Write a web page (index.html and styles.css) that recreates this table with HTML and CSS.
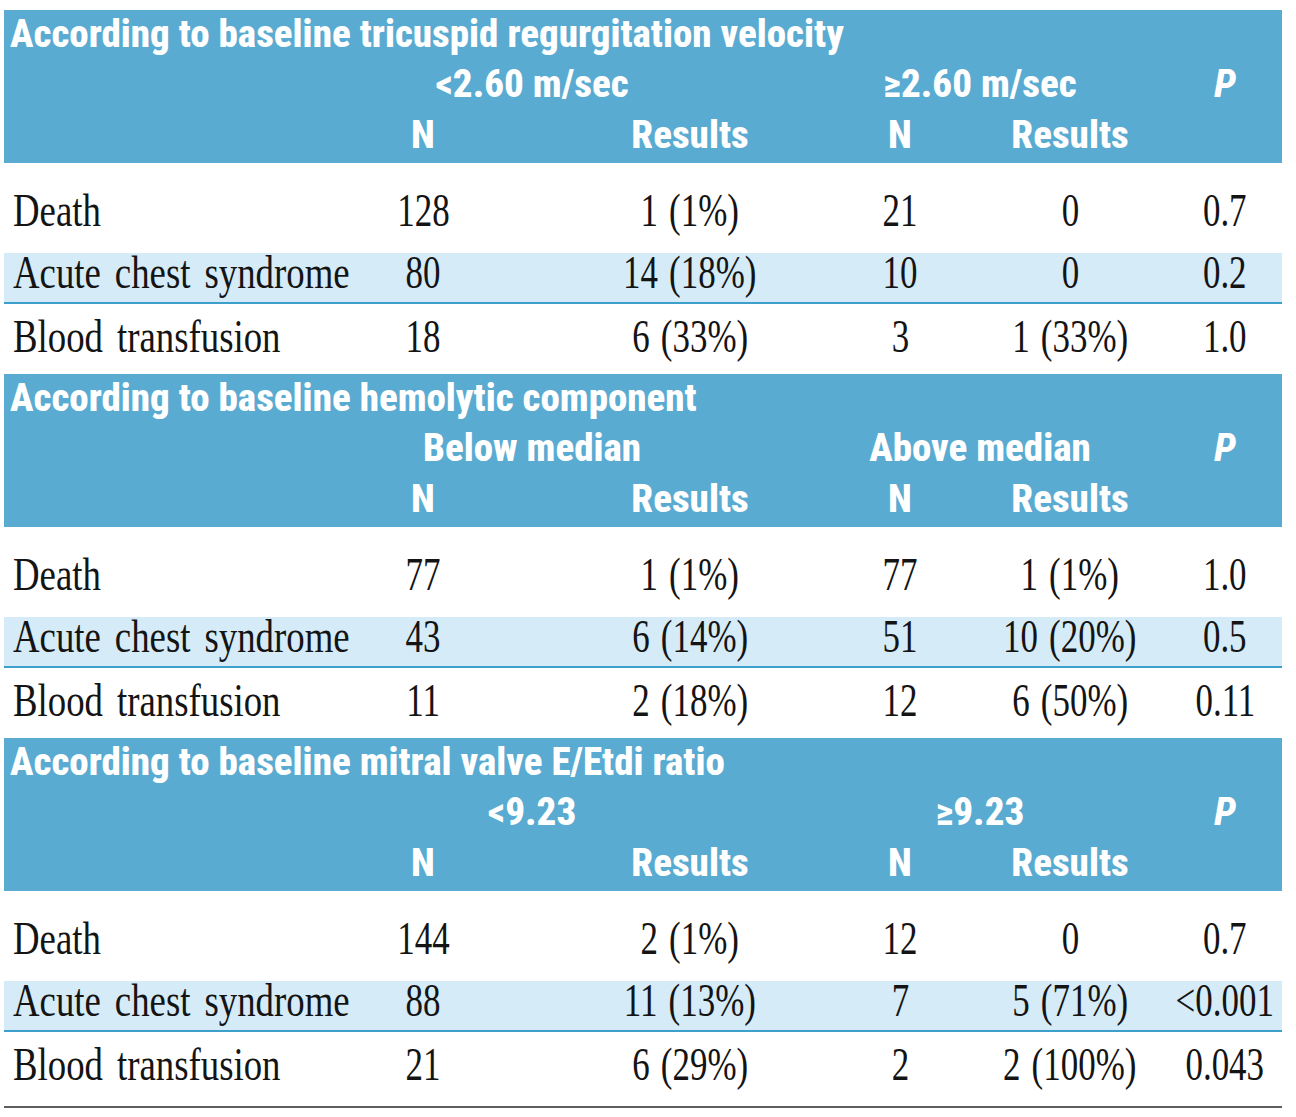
FILE: index.html
```html
<!DOCTYPE html>
<html lang="en">
<head>
<meta charset="utf-8">
<title>Outcomes according to baseline echocardiography</title>
<link rel="stylesheet" href="styles.css">
</head>
<body>
<div class="table">

  <section class="sec">
    <div class="head">
      <div class="title">According to baseline tricuspid regurgitation velocity</div>
      <div class="grid groups">
        <div></div>
        <div class="g1">&lt;2.60 m/sec</div>
        <div class="g2">≥2.60 m/sec</div>
        <div class="pcol"><i>P</i></div>
      </div>
      <div class="grid cols">
        <div></div>
        <div class="n1">N</div>
        <div class="r1">Results</div>
        <div class="n2">N</div>
        <div class="r2">Results</div>
        <div></div>
      </div>
    </div>
    <div class="grid row ra">
      <div class="lab"><span class="sq">Death</span></div>
      <div class="n1"><span class="nq">128</span></div>
      <div class="r1"><span class="nq">1 (1%)</span></div>
      <div class="n2"><span class="nq">21</span></div>
      <div class="r2"><span class="nq">0</span></div>
      <div class="pcol"><span class="nq">0.7</span></div>
    </div>
    <div class="grid row rb">
      <div class="lab"><span class="sq">Acute chest syndrome</span></div>
      <div class="n1"><span class="nq">80</span></div>
      <div class="r1"><span class="nq">14 (18%)</span></div>
      <div class="n2"><span class="nq">10</span></div>
      <div class="r2"><span class="nq">0</span></div>
      <div class="pcol"><span class="nq">0.2</span></div>
    </div>
    <div class="grid row rc">
      <div class="lab"><span class="sq">Blood transfusion</span></div>
      <div class="n1"><span class="nq">18</span></div>
      <div class="r1"><span class="nq">6 (33%)</span></div>
      <div class="n2"><span class="nq">3</span></div>
      <div class="r2"><span class="nq">1 (33%)</span></div>
      <div class="pcol"><span class="nq">1.0</span></div>
    </div>
  </section>

  <section class="sec">
    <div class="head">
      <div class="title">According to baseline hemolytic component</div>
      <div class="grid groups">
        <div></div>
        <div class="g1">Below median</div>
        <div class="g2">Above median</div>
        <div class="pcol"><i>P</i></div>
      </div>
      <div class="grid cols">
        <div></div>
        <div class="n1">N</div>
        <div class="r1">Results</div>
        <div class="n2">N</div>
        <div class="r2">Results</div>
        <div></div>
      </div>
    </div>
    <div class="grid row ra">
      <div class="lab"><span class="sq">Death</span></div>
      <div class="n1"><span class="nq">77</span></div>
      <div class="r1"><span class="nq">1 (1%)</span></div>
      <div class="n2"><span class="nq">77</span></div>
      <div class="r2"><span class="nq">1 (1%)</span></div>
      <div class="pcol"><span class="nq">1.0</span></div>
    </div>
    <div class="grid row rb">
      <div class="lab"><span class="sq">Acute chest syndrome</span></div>
      <div class="n1"><span class="nq">43</span></div>
      <div class="r1"><span class="nq">6 (14%)</span></div>
      <div class="n2"><span class="nq">51</span></div>
      <div class="r2"><span class="nq">10 (20%)</span></div>
      <div class="pcol"><span class="nq">0.5</span></div>
    </div>
    <div class="grid row rc">
      <div class="lab"><span class="sq">Blood transfusion</span></div>
      <div class="n1"><span class="nq">11</span></div>
      <div class="r1"><span class="nq">2 (18%)</span></div>
      <div class="n2"><span class="nq">12</span></div>
      <div class="r2"><span class="nq">6 (50%)</span></div>
      <div class="pcol"><span class="nq">0.11</span></div>
    </div>
  </section>

  <section class="sec">
    <div class="head">
      <div class="title">According to baseline mitral valve E/Etdi ratio</div>
      <div class="grid groups">
        <div></div>
        <div class="g1">&lt;9.23</div>
        <div class="g2">≥9.23</div>
        <div class="pcol"><i>P</i></div>
      </div>
      <div class="grid cols">
        <div></div>
        <div class="n1">N</div>
        <div class="r1">Results</div>
        <div class="n2">N</div>
        <div class="r2">Results</div>
        <div></div>
      </div>
    </div>
    <div class="grid row ra">
      <div class="lab"><span class="sq">Death</span></div>
      <div class="n1"><span class="nq">144</span></div>
      <div class="r1"><span class="nq">2 (1%)</span></div>
      <div class="n2"><span class="nq">12</span></div>
      <div class="r2"><span class="nq">0</span></div>
      <div class="pcol"><span class="nq">0.7</span></div>
    </div>
    <div class="grid row rb">
      <div class="lab"><span class="sq">Acute chest syndrome</span></div>
      <div class="n1"><span class="nq">88</span></div>
      <div class="r1"><span class="nq">11 (13%)</span></div>
      <div class="n2"><span class="nq">7</span></div>
      <div class="r2"><span class="nq">5 (71%)</span></div>
      <div class="pcol"><span class="nq">&lt;0.001</span></div>
    </div>
    <div class="grid row rc last">
      <div class="lab"><span class="sq">Blood transfusion</span></div>
      <div class="n1"><span class="nq">21</span></div>
      <div class="r1"><span class="nq">6 (29%)</span></div>
      <div class="n2"><span class="nq">2</span></div>
      <div class="r2"><span class="nq">2 (100%)</span></div>
      <div class="pcol"><span class="nq">0.043</span></div>
    </div>
  </section>

</div>
</body>
</html>
```
FILE: styles.css
```css
html, body {
  margin: 0;
  padding: 0;
  background: #ffffff;
}

.table {
  margin: 10px 0 0 4px;
  width: 1278px;
  font-family: "Liberation Serif", "Times New Roman", serif;
  color: #141414;
}

.grid {
  display: grid;
  grid-template-columns: 366px 106px 324px 200px 140px 142px;
}

.grid > div {
  display: flex;
  justify-content: center;
  white-space: nowrap;
}

/* column alignment */
.r1 { padding-left: 104px; }
.pcol { padding-left: 28px; }

/* header band */
.head {
  background: #5aabd1;
  color: #ffffff;
  font-family: "Roboto Condensed", "Liberation Sans", sans-serif;
  font-weight: 800;
  font-size: 39px;
  padding-bottom: 3px;
}

.title {
  line-height: 48px;
  padding-left: 6px;
  white-space: nowrap;
}

.groups { line-height: 52px; }
.cols { line-height: 50px; }

.g1 {
  grid-column: span 2;
  padding-right: 106px;
}

.g2 {
  grid-column: span 2;
  padding-left: 20px;
}

.groups .pcol i {
  font-style: italic;
}

/* body rows */
.row {
  font-size: 46px;
  line-height: 40px;
}

.grid > .lab {
  justify-content: flex-start;
  padding-left: 9px;
}

.sq {
  display: inline-block;
  flex: none;
  transform: scaleX(0.8);
  transform-origin: left center;
  word-spacing: 6px;
}

.nq {
  display: inline-block;
  flex: none;
  transform: scaleX(0.76);
  transform-origin: center center;
  word-spacing: 3px;
}

.ra {
  padding: 28px 0 22px;
}

.rb {
  background: #d5ebf8;
  padding: 0 0 9px;
  border-bottom: 2px solid #3d9fcc;
}

.rc {
  padding: 13px 0 17px;
}

.rc.last {
  padding-bottom: 21px;
  border-bottom: 2px solid #5e5e5e;
}
```
